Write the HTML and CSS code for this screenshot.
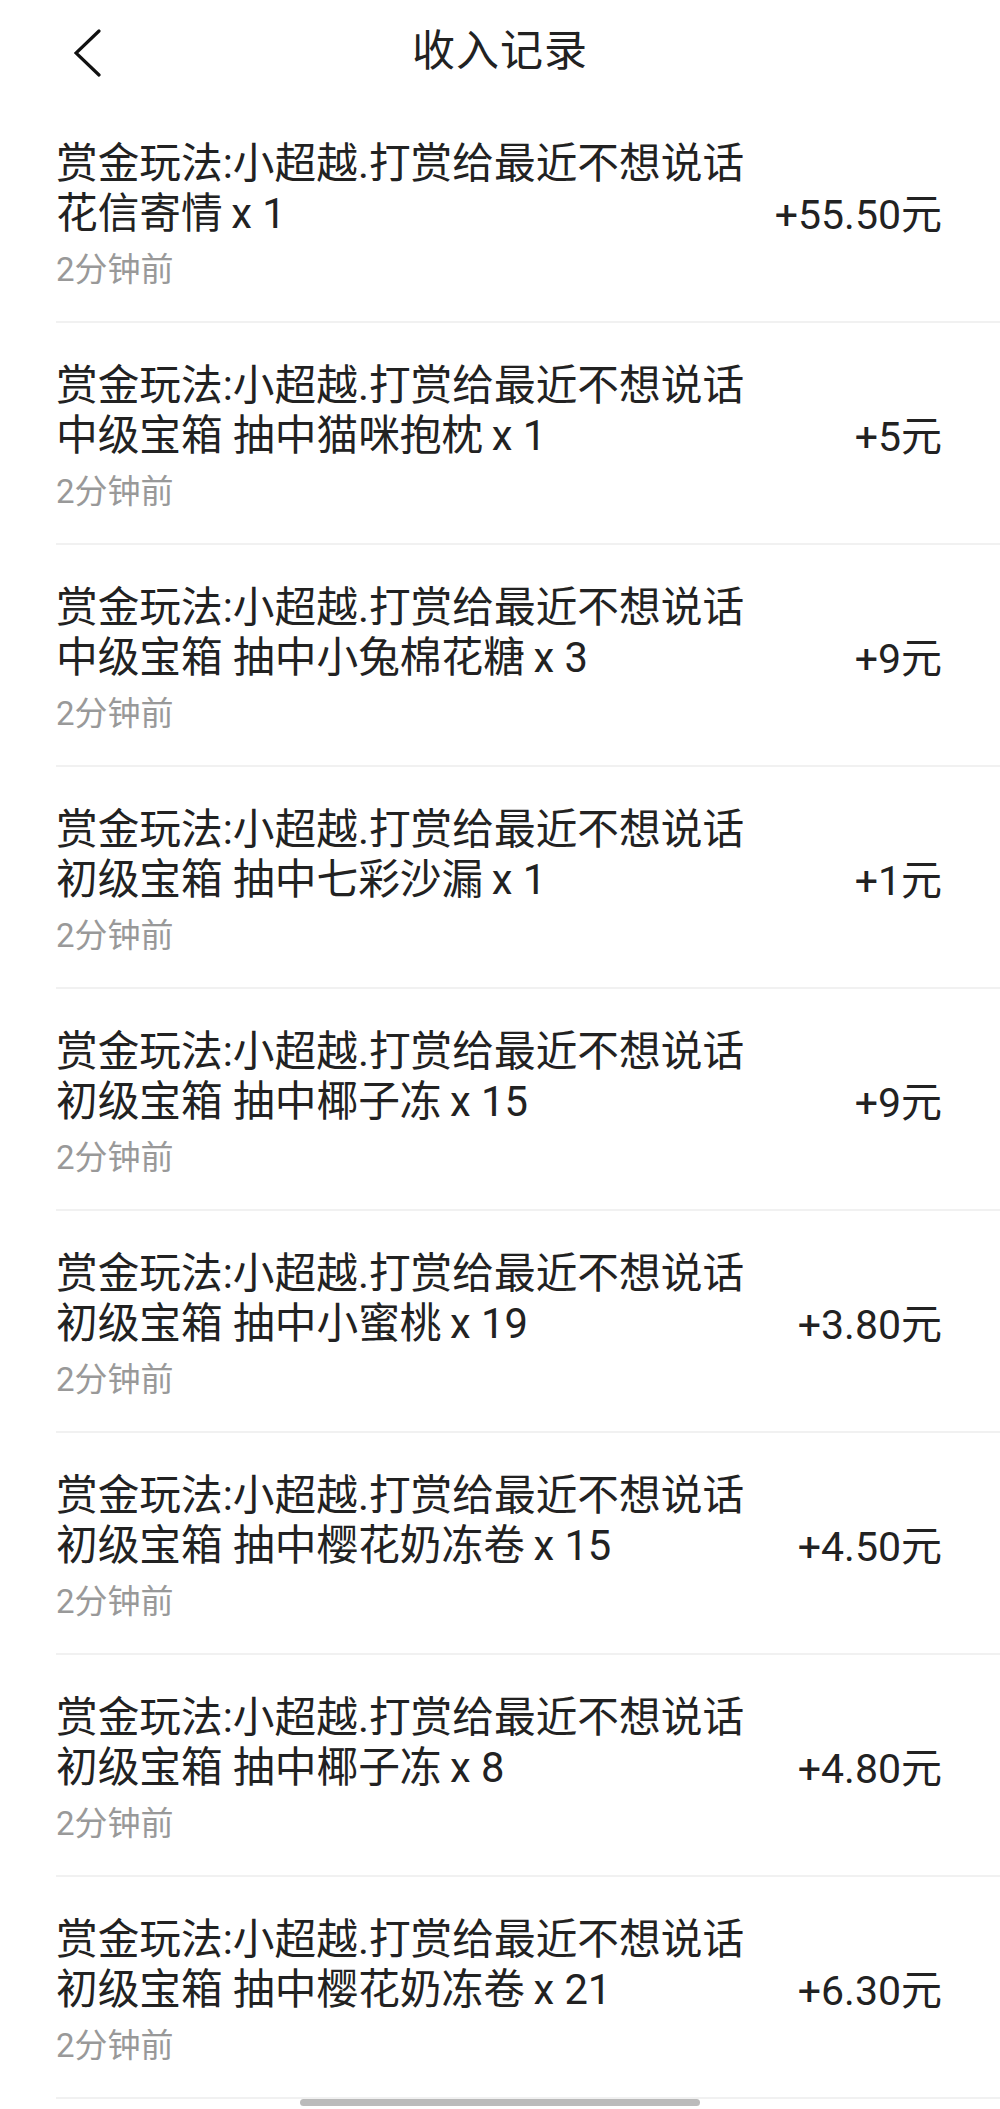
FILE: index.html
```html
<!DOCTYPE html>
<html lang="zh-CN">
<head>
    <meta charset="UTF-8">
    <meta name="viewport" content="width=device-width, initial-scale=1.0">
    <title>收入记录</title>
    <link rel="stylesheet" href="styles.css">
</head>
<body>
    <header class="header">
        <a class="back-btn" href="#">
            <svg width="30" height="50" viewBox="0 0 30 50">
                <polyline points="25,2 2,24 25,46" fill="none" stroke="#111" stroke-width="3.2" stroke-linecap="round" stroke-linejoin="miter"/>
            </svg>
        </a>
        <h1 class="header-title">收入记录</h1>
    </header>

    <ul class="record-list">
        <li class="record">
            <div class="record-info">
                <p class="record-name">赏金玩法:小超越.打赏给最近不想说话<br>花信寄情&thinsp;x 1</p>
                <p class="record-time">2分钟前</p>
            </div>
            <div class="record-amount">+55.50元</div>
        </li>
        <li class="record">
            <div class="record-info">
                <p class="record-name">赏金玩法:小超越.打赏给最近不想说话<br>中级宝箱 抽中猫咪抱枕&thinsp;x 1</p>
                <p class="record-time">2分钟前</p>
            </div>
            <div class="record-amount">+5元</div>
        </li>
        <li class="record">
            <div class="record-info">
                <p class="record-name">赏金玩法:小超越.打赏给最近不想说话<br>中级宝箱 抽中小兔棉花糖&thinsp;x 3</p>
                <p class="record-time">2分钟前</p>
            </div>
            <div class="record-amount">+9元</div>
        </li>
        <li class="record">
            <div class="record-info">
                <p class="record-name">赏金玩法:小超越.打赏给最近不想说话<br>初级宝箱 抽中七彩沙漏&thinsp;x 1</p>
                <p class="record-time">2分钟前</p>
            </div>
            <div class="record-amount">+1元</div>
        </li>
        <li class="record">
            <div class="record-info">
                <p class="record-name">赏金玩法:小超越.打赏给最近不想说话<br>初级宝箱 抽中椰子冻&thinsp;x 15</p>
                <p class="record-time">2分钟前</p>
            </div>
            <div class="record-amount">+9元</div>
        </li>
        <li class="record">
            <div class="record-info">
                <p class="record-name">赏金玩法:小超越.打赏给最近不想说话<br>初级宝箱 抽中小蜜桃&thinsp;x 19</p>
                <p class="record-time">2分钟前</p>
            </div>
            <div class="record-amount">+3.80元</div>
        </li>
        <li class="record">
            <div class="record-info">
                <p class="record-name">赏金玩法:小超越.打赏给最近不想说话<br>初级宝箱 抽中樱花奶冻卷&thinsp;x 15</p>
                <p class="record-time">2分钟前</p>
            </div>
            <div class="record-amount">+4.50元</div>
        </li>
        <li class="record">
            <div class="record-info">
                <p class="record-name">赏金玩法:小超越.打赏给最近不想说话<br>初级宝箱 抽中椰子冻&thinsp;x 8</p>
                <p class="record-time">2分钟前</p>
            </div>
            <div class="record-amount">+4.80元</div>
        </li>
        <li class="record">
            <div class="record-info">
                <p class="record-name">赏金玩法:小超越.打赏给最近不想说话<br>初级宝箱 抽中樱花奶冻卷&thinsp;x 21</p>
                <p class="record-time">2分钟前</p>
            </div>
            <div class="record-amount">+6.30元</div>
        </li>
    </ul>

    <div class="home-bar"></div>
</body>
</html>
```

FILE: styles.css
```css
/* 全体 */
body {
    margin: 0;
    padding: 0;
    background: #fff;
    color: #222;
    font-family: Roboto, "Noto Sans CJK SC", sans-serif;
    overflow: hidden;
}

/* ヘッダー */
.header {
    height: 101px;
    display: flex;
    align-items: center;
    justify-content: center;
    position: relative;
}

.back-btn {
    position: absolute;
    left: 74px;
    top: 29px;
    display: block;
    line-height: 0;
}

.header-title {
    margin: 0 0 8px;
    font-size: 43px;
    font-weight: normal;
    color: #222;
    letter-spacing: 1px;
}

/* 記録リスト */
.record-list {
    list-style: none;
    margin: 0;
    padding: 0;
}

.record {
    height: 220px;
    margin-left: 56px;
    padding-right: 58px;
    border-bottom: 2px solid #f1f1f1;
    display: flex;
    align-items: center;
    justify-content: space-between;
}

.record-info {
    padding-top: 4px;
}

.record-name {
    margin: 0;
    font-size: 41.7px;
    line-height: 50px;
    color: #222;
}

.record-time {
    margin: 12px 0 0;
    font-size: 33px;
    line-height: 37px;
    color: #999;
}

.record-amount {
    font-size: 41px;
    color: #222;
    white-space: nowrap;
}

/* ホームバー */
.home-bar {
    position: fixed;
    left: 300px;
    bottom: 3px;
    width: 400px;
    height: 7px;
    border-radius: 4px;
    background: #bbb;
}
```
